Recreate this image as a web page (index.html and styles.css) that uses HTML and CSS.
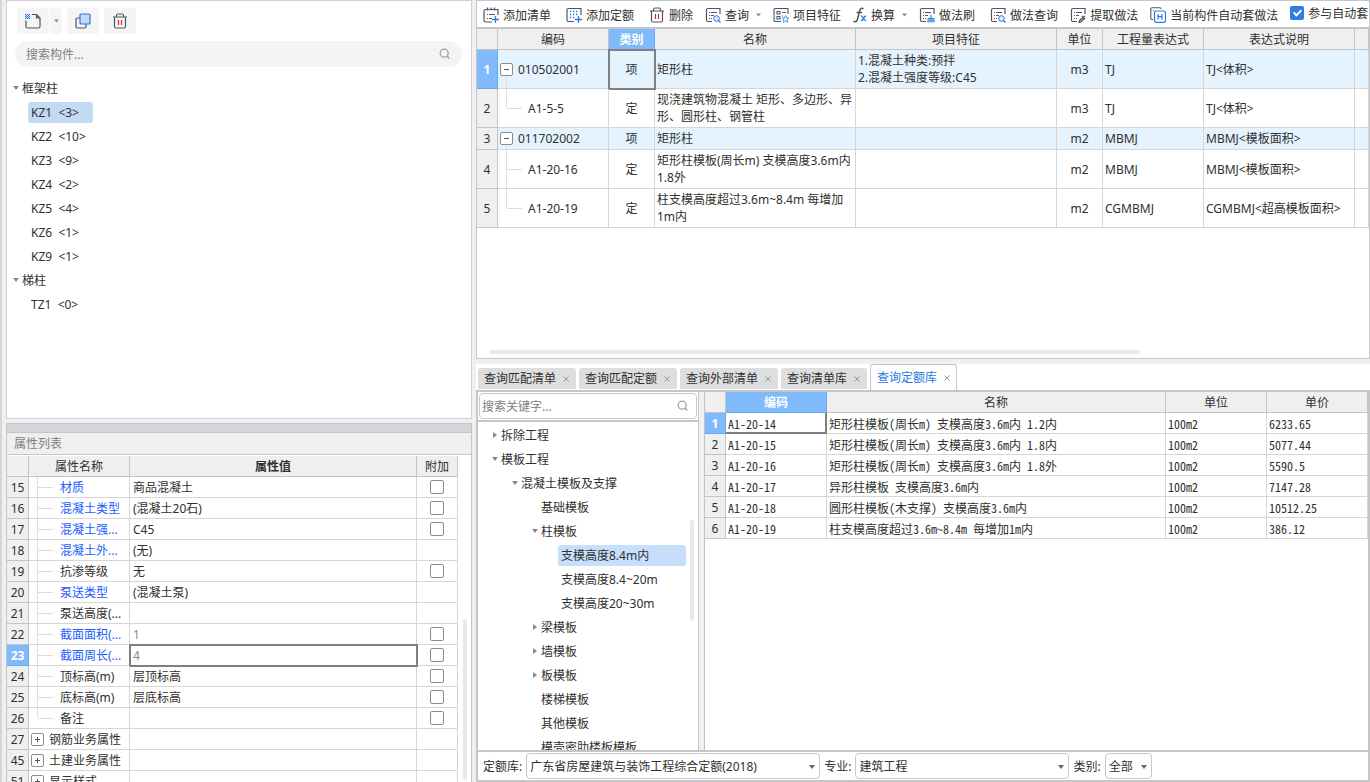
FILE: index.html
```html
<!DOCTYPE html>
<html lang="zh-CN">
<head>
<meta charset="utf-8">
<title>构件做法</title>
<link rel="stylesheet" href="styles.css">
</head>
<body>
<svg class="defs" aria-hidden="true">
  <symbol id="search" viewBox="0 0 12 12"><circle cx="5.2" cy="5.2" r="4" fill="none" stroke="#a0a0a0" stroke-width="1.3"/><path d="M8 8l2.3 2.5" stroke="#a0a0a0" stroke-width="1.4"/></symbol>
  <symbol id="close" viewBox="0 0 6 6"><path d="M.5.5l5 5M5.500.5l-5 5" stroke="#999" stroke-width="1" fill="none"/></symbol>
  <symbol id="down" viewBox="0 0 5 4"><path d="M0 .5h5L2.500 3.500z" fill="#888"/></symbol>
  <symbol id="trash" viewBox="0 0 16 16"><path d="M1 4h14M4.500 4V2.500a1.500 1.500 0 0 1 1.500-1.500h4a1.500 1.500 0 0 1 1.500 1.500V4M2.500 4v9.500a1.500 1.500 0 0 0 1.500 1.500h8a1.500 1.500 0 0 0 1.500-1.500V4" fill="none" stroke="#4d5566" stroke-width="1.200"/><path d="M6.500 7v5M9.500 7v5" stroke="#e02020" stroke-width="1.200"/></symbol>
  <symbol id="sheet" viewBox="0 0 16 16"><path d="M15 7V1.500H3A1.500 1.500 0 0 0 1.500 3v10A1.500 1.500 0 0 0 3 14.500h4" fill="none" stroke="#4d5566" stroke-width="1.200"/><path d="M4 5.500h1M6 5.500h6M4 8.500h1M6 8.500h3M4 11.500h1M6 11.500h1" stroke="#4d5566" stroke-width="1.100"/></symbol>
</svg>
<div class="app">
  <section class="side">
    <div class="components">
      <div class="comp-tools">
        <span class="split">
          <button class="sq" aria-label="新建"><svg width="16" height="16" viewBox="0 0 16 16"><path d="M7 1.500h4.500l3.500 3.500v8.500a1.500 1.500 0 0 1-1.500 1.500h-11A1.500 1.500 0 0 1 1 13.500V7.500M11.500 1.500V5H15" fill="none" stroke="#4d5566" stroke-width="1.200"/><path d="M0 1h5v5H0z" fill="#b9d5f8"/><path d="M0 1h1v1H0zM2 1h1v1H2zM4 1h1v1H4zM1 2h1v1H1zM3 2h1v1H3zM0 3h1v1H0zM2 3h1v1H2zM4 3h1v1H4zM1 4h1v1H1zM3 4h1v1H3zM0 5h1v1H0zM2 5h1v1H2zM4 5h1v1H4z" fill="#2f7fe6"/></svg></button>
          <button class="sq slim" aria-label="新建选项"><svg width="5" height="4"><use href="#down"/></svg></button>
        </span>
        <button class="sq" aria-label="复制"><svg width="16" height="16" viewBox="0 0 16 16"><rect x="1" y="5" width="10" height="10" rx="1.500" fill="none" stroke="#4d5566" stroke-width="1.200"/><rect x="5" y="1" width="10" height="10" rx="1" fill="#c5d9f3" stroke="#2878e0" stroke-width="1.200"/></svg></button>
        <button class="sq" aria-label="删除构件"><svg width="16" height="16"><use href="#trash"/></svg></button>
      </div>
      <label class="find"><input type="text" placeholder="搜索构件..." aria-label="搜索构件"><svg width="12" height="12"><use href="#search"/></svg></label>
      <ul class="tree">
        <li><i class="tri open"></i>框架柱</li>
        <li class="leaf"><span class="pick">KZ1&nbsp; &lt;3&gt;</span></li>
        <li class="leaf">KZ2&nbsp; &lt;10&gt;</li>
        <li class="leaf">KZ3&nbsp; &lt;9&gt;</li>
        <li class="leaf">KZ4&nbsp; &lt;2&gt;</li>
        <li class="leaf">KZ5&nbsp; &lt;4&gt;</li>
        <li class="leaf">KZ6&nbsp; &lt;1&gt;</li>
        <li class="leaf">KZ9&nbsp; &lt;1&gt;</li>
        <li><i class="tri open"></i>梯柱</li>
        <li class="leaf">TZ1&nbsp; &lt;0&gt;</li>
      </ul>
    </div>
    <div class="props">
      <div class="grip"></div>
      <h2>属性列表</h2>
      <div class="props-body">
      <table class="grid prop-grid">
        <colgroup><col class="w22"><col class="w101"><col><col class="w41"></colgroup>
        <thead><tr><th></th><th>属性名称</th><th class="b">属性值</th><th>附加</th></tr></thead>
        <tbody>
        <tr><th>15</th><td class="branch link">材质</td><td>商品混凝土</td><td class="c"><input type="checkbox" aria-label="附加 材质"></td></tr>
        <tr><th>16</th><td class="branch link">混凝土类型</td><td>(混凝土20石)</td><td class="c"><input type="checkbox" aria-label="附加 混凝土类型"></td></tr>
        <tr><th>17</th><td class="branch link">混凝土强...</td><td>C45</td><td class="c"><input type="checkbox" aria-label="附加 混凝土强度"></td></tr>
        <tr><th>18</th><td class="branch link">混凝土外...</td><td>(无)</td><td></td></tr>
        <tr><th>19</th><td class="branch">抗渗等级</td><td>无</td><td class="c"><input type="checkbox" aria-label="附加 抗渗等级"></td></tr>
        <tr><th>20</th><td class="branch link">泵送类型</td><td>(混凝土泵)</td><td></td></tr>
        <tr><th>21</th><td class="branch">泵送高度(...</td><td></td><td></td></tr>
        <tr><th>22</th><td class="branch link">截面面积(...</td><td class="dim">1</td><td class="c"><input type="checkbox" aria-label="附加 截面面积"></td></tr>
        <tr><th class="on">23</th><td class="branch link">截面周长(...</td><td class="dim cursor">4</td><td class="c"><input type="checkbox" aria-label="附加 截面周长"></td></tr>
        <tr><th>24</th><td class="branch">顶标高(m)</td><td>层顶标高</td><td class="c"><input type="checkbox" aria-label="附加 顶标高"></td></tr>
        <tr><th>25</th><td class="branch">底标高(m)</td><td>层底标高</td><td class="c"><input type="checkbox" aria-label="附加 底标高"></td></tr>
        <tr><th>26</th><td class="branch last">备注</td><td></td><td class="c"><input type="checkbox" aria-label="附加 备注"></td></tr>
        <tr><th>27</th><td class="root"><div class="node"><button class="exp plus" aria-label="展开"></button>钢筋业务属性</div></td><td></td><td></td></tr>
        <tr><th>45</th><td class="root"><div class="node"><button class="exp plus" aria-label="展开"></button>土建业务属性</div></td><td></td><td></td></tr>
        <tr><th>51</th><td class="root"><div class="node"><button class="exp plus" aria-label="展开"></button>显示样式</div></td><td></td><td></td></tr>
        </tbody>
      </table>
      <div class="thumb prop-thumb"></div>
      </div>
    </div>
  </section>

  <main class="work">
    <section class="bill">
      <div class="tools">
        <button class="tool wide"><svg width="16" height="16" viewBox="0 0 16 16"><path d="M15 8V2.500H2.500A1.500 1.500 0 0 0 1 4v9.500h0A1.500 1.500 0 0 0 2.500 15H9M4.500.5v3M8 .5v3M11.500.5v3" fill="none" stroke="#4d5566" stroke-width="1.200"/><path d="M4 7.500h1M6 7.500h6M4 11.500h1M6 11.500h3" stroke="#4d5566" stroke-width="1.100"/><path d="M12.500 9v7M9 12.500h7" stroke="#2878e0" stroke-width="1.300"/></svg>添加清单</button>
        <button class="tool wide"><svg width="16" height="16" viewBox="0 0 16 16"><path d="M15 8V1.500H2.500A1.500 1.500 0 0 0 1 3v10a1.500 1.500 0 0 0 1.500 1.500H8" fill="none" stroke="#4d5566" stroke-width="1.200"/><path d="M4 4.500h1.300M7 4.500h1.300M10 4.500h1.300M4 7.500h1.300M7 7.500h1.300M10 7.500h1.300M4 10.500h1.300M7 10.500h1.300" stroke="#2878e0" stroke-width="1.300"/><path d="M12.500 9v7M9 12.500h7" stroke="#2878e0" stroke-width="1.300"/></svg>添加定额</button>
        <button class="tool"><svg width="16" height="16"><use href="#trash"/></svg>删除</button>
        <button class="tool"><svg width="16" height="16" viewBox="0 0 16 16"><use href="#sheet"/><circle cx="11.500" cy="11.500" r="2.800" fill="#dcebfc" stroke="#2878e0"/><path d="M13.500 13.500l2 2" stroke="#2878e0" stroke-width="1.200"/></svg>查询<svg class="drop" width="5" height="4"><use href="#down"/></svg></button>
        <button class="tool"><svg width="16" height="16" viewBox="0 0 16 16"><path d="M15 7V1.500H2A1 1 0 0 0 1 2.500v11a1 1 0 0 0 1 1h6M4 4.500h3v2.500H4zM4 9.500h3V12H4zM9 5.500h4M9 9h1" fill="none" stroke="#4d5566" stroke-width="1.100"/><path d="M12.500 8.500l1.200 2.300 2.300.3-1.700 1.700.4 2.500-2.200-1.200-2.200 1.200.4-2.500L9 11.100l2.300-.3z" fill="#dcebfc" stroke="#4a90e8" stroke-width=".9"/></svg>项目特征</button>
        <button class="tool"><svg width="14" height="16" viewBox="0 0 14 16"><path d="M10.500 1.800C9 .6 7.300 1.400 6.700 3.800L4.500 12.200C3.900 14.500 2.200 15.400.3 14.400M3.500 5.500h5.500" fill="none" stroke="#4d5566" stroke-width="1.500"/><path d="M8 9c2.200-1 2.300 5.300 5.200 4.500M13 9c-2 0-2.500 4.500-5.200 4.600" fill="none" stroke="#2878e0" stroke-width="1.400"/></svg>换算<svg class="drop" width="5" height="4"><use href="#down"/></svg></button>
        <button class="tool wide"><svg width="16" height="16" viewBox="0 0 16 16"><use href="#sheet"/><path d="M12 8v3M8.500 11.500h7M9 13.500v2M11 13v2.500M13 13v2.500M15 13.500v2M8.500 13h7" stroke="#2878e0" stroke-width="1.200" fill="none"/></svg>做法刷</button>
        <button class="tool"><svg width="16" height="16" viewBox="0 0 16 16"><use href="#sheet"/><circle cx="11.500" cy="11.500" r="2.800" fill="#dcebfc" stroke="#2878e0"/><path d="M13.500 13.500l2 2" stroke="#2878e0" stroke-width="1.200"/></svg>做法查询</button>
        <button class="tool"><svg width="16" height="16" viewBox="0 0 16 16"><use href="#sheet"/><path d="M9 15.500l.5-2 3-3 1.500 1.500-3 3zM12 9l3 3M13.500 10.500L15 9" fill="#a8b0bd" stroke="#4d5566" stroke-width="1.100"/></svg>提取做法</button>
        <button class="tool"><svg width="16" height="16" viewBox="0 0 16 16"><path d="M3 12.500H2A1.200 1.200 0 0 1 .8 11.300V2A1.200 1.200 0 0 1 2 .8h8A1.200 1.200 0 0 1 11.200 2M3 3.500h1" fill="none" stroke="#4d5566" stroke-width="1.100"/><rect x="4.500" y="4" width="11" height="11.300" rx="1.800" fill="#fff" stroke="#2878e0" stroke-width="1.200"/><path d="M8 7v5.500M12 7v5.500M8 9.700h4" stroke="#2878e0" stroke-width="1.200"/></svg>当前构件自动套做法</button>
        <label class="auto"><input type="checkbox" checked>参与自动套</label>
      </div>
      <table class="grid bill-grid">
        <colgroup><col class="w21"><col class="w111"><col class="w46"><col class="w201"><col class="w201"><col class="w46"><col class="w101"><col class="w151"><col></colgroup>
        <thead><tr><th></th><th>编码</th><th class="on">类别</th><th>名称</th><th>项目特征</th><th>单位</th><th>工程量表达式</th><th>表达式说明</th><th></th></tr></thead>
        <tbody>
        <tr class="item tall"><th class="on">1</th><td class="stem"><div class="node"><button class="exp" aria-label="折叠"></button>010502001</div></td><td class="c cursor">项</td><td>矩形柱</td><td>1.混凝土种类:预拌<br>2.混凝土强度等级:C45</td><td class="c">m3</td><td>TJ</td><td>TJ&lt;体积&gt;</td><td></td></tr>
        <tr class="tall"><th>2</th><td class="branch last">A1-5-5</td><td class="c">定</td><td>现浇建筑物混凝土 矩形、多边形、异<br>形、圆形柱、钢管柱</td><td></td><td class="c">m3</td><td>TJ</td><td>TJ&lt;体积&gt;</td><td></td></tr>
        <tr class="item"><th>3</th><td class="stem"><div class="node"><button class="exp" aria-label="折叠"></button>011702002</div></td><td class="c">项</td><td>矩形柱</td><td></td><td class="c">m2</td><td>MBMJ</td><td>MBMJ&lt;模板面积&gt;</td><td></td></tr>
        <tr class="tall"><th>4</th><td class="branch">A1-20-16</td><td class="c">定</td><td>矩形柱模板(周长m) 支模高度3.6m内<br>1.8外</td><td></td><td class="c">m2</td><td>MBMJ</td><td>MBMJ&lt;模板面积&gt;</td><td></td></tr>
        <tr class="tall"><th>5</th><td class="branch last">A1-20-19</td><td class="c">定</td><td>柱支模高度超过3.6m~8.4m 每增加<br>1m内</td><td></td><td class="c">m2</td><td>CGMBMJ</td><td>CGMBMJ&lt;超高模板面积&gt;</td><td></td></tr>
        </tbody>
      </table>
      <div class="thumb wide-thumb"></div>
    </section>

    <section class="query">
      <div class="tabs" role="tablist">
        <button class="tab" role="tab">查询匹配清单<svg width="6" height="6"><use href="#close"/></svg></button>
        <button class="tab" role="tab">查询匹配定额<svg width="6" height="6"><use href="#close"/></svg></button>
        <button class="tab" role="tab">查询外部清单<svg width="6" height="6"><use href="#close"/></svg></button>
        <button class="tab" role="tab">查询清单库<svg width="6" height="6"><use href="#close"/></svg></button>
        <button class="tab current" role="tab" aria-selected="true">查询定额库<svg width="6" height="6"><use href="#close"/></svg></button>
      </div>
      <div class="split-view">
        <div class="catalog">
          <div class="find-row"><label class="find boxed"><input type="text" placeholder="搜索关键字..." aria-label="搜索关键字"><svg width="12" height="12"><use href="#search"/></svg></label></div>
          <ul class="tree">
            <li class="l1"><i class="tri"></i>拆除工程</li>
            <li class="l1"><i class="tri open"></i>模板工程</li>
            <li class="l2"><i class="tri open"></i>混凝土模板及支撑</li>
            <li class="l3"><i class="tri none"></i>基础模板</li>
            <li class="l3"><i class="tri open"></i>柱模板</li>
            <li class="l4"><span class="pick">支模高度8.4m内</span></li>
            <li class="l4"><span>支模高度8.4~20m</span></li>
            <li class="l4"><span>支模高度20~30m</span></li>
            <li class="l3"><i class="tri"></i>梁模板</li>
            <li class="l3"><i class="tri"></i>墙模板</li>
            <li class="l3"><i class="tri"></i>板模板</li>
            <li class="l3"><i class="tri none"></i>楼梯模板</li>
            <li class="l3"><i class="tri none"></i>其他模板</li>
            <li class="l3"><i class="tri none"></i>模壳密肋楼板模板</li>
          </ul>
          <div class="thumb cat-thumb"></div>
        </div>
        <div class="results">
          <table class="grid result-grid">
            <colgroup><col class="w21"><col class="w101"><col><col class="w101"><col class="w101"></colgroup>
            <thead><tr><th></th><th class="on">编码</th><th>名称</th><th>单位</th><th>单价</th></tr></thead>
            <tbody>
            <tr><th class="on">1</th><td class="cursor-end">A1-20-14</td><td>矩形柱模板(周长m) 支模高度3.6m内 1.2内</td><td>100m2</td><td>6233.65</td></tr>
            <tr><th>2</th><td>A1-20-15</td><td>矩形柱模板(周长m) 支模高度3.6m内 1.8内</td><td>100m2</td><td>5077.44</td></tr>
            <tr><th>3</th><td>A1-20-16</td><td>矩形柱模板(周长m) 支模高度3.6m内 1.8外</td><td>100m2</td><td>5590.5</td></tr>
            <tr><th>4</th><td>A1-20-17</td><td>异形柱模板 支模高度3.6m内</td><td>100m2</td><td>7147.28</td></tr>
            <tr><th>5</th><td>A1-20-18</td><td>圆形柱模板(木支撑) 支模高度3.6m内</td><td>100m2</td><td>10512.25</td></tr>
            <tr><th>6</th><td>A1-20-19</td><td>柱支模高度超过3.6m~8.4m 每增加1m内</td><td>100m2</td><td>386.12</td></tr>
            </tbody>
          </table>
        </div>
      </div>
      <div class="filters">
        <label for="lib">定额库:</label><span class="pickbox lib"><select id="lib"><option>广东省房屋建筑与装饰工程综合定额(2018)</option></select></span>
        <label for="major">专业:</label><span class="pickbox major"><select id="major"><option>建筑工程</option></select></span>
        <label for="kind">类别:</label><span class="pickbox kind"><select id="kind"><option>全部</option></select></span>
      </div>
    </section>
  </main>
</div>
</body>
</html>
```
FILE: styles.css
```css
*, *::before, *::after { box-sizing: border-box; }
body, button, input, select, table { font: 12px/17px "Noto Sans", "Noto Sans CJK SC", sans-serif; color: #303030; }
body { margin: 0; background: #f0f0f0; }
button { border: 0; background: none; padding: 0; white-space: nowrap; }
ul { list-style: none; margin: 0; padding: 0; }
svg { flex: none; }
.defs { display: none; }

.app {
  height: 100vh; overflow: hidden; display: grid;
  grid-template-columns: 466fr 894fr; grid-template-rows: 100%;
  gap: 4px; padding-left: 4px; border-left: 2px solid #d6d6d6;
}
.side, .work { display: grid; grid-template-columns: 100%; min-width: 0; }
.side { grid-template-rows: minmax(0, 419fr) minmax(0, 359fr); gap: 4px; }
.work { grid-template-rows: minmax(0, 359fr) minmax(0, 418fr); gap: 5px; }

/* component list */
.components { background: #fff; border: 1px solid #d0d0d0; padding-top: 7px; overflow: hidden; }
.comp-tools { display: flex; gap: 5px; padding-left: 10px; }
.split { display: flex; gap: 1px; }
.sq { width: 32px; height: 26px; border-radius: 3px; background: #f5f5f5; display: flex; align-items: center; justify-content: center; }
.slim { width: 12px; }
.find { display: flex; align-items: center; height: 26px; background: #f4f4f4; }
.find input { flex: 1; min-width: 0; border: 0; background: none; outline: 0; padding: 0; }
.find input::placeholder { color: #808080; opacity: 1; }
.components .find { margin: 7px 9px 9px 8px; padding: 0 11px; border-radius: 13px; }
.tree li { height: 24px; display: flex; align-items: center; white-space: nowrap; }
.components .tree { padding-left: 6px; }
.components .leaf { padding-left: 18px; }
.components .pick { margin-left: -3px; padding: 2px 14px 2px 3px; background: #c2daf2; }
.pick { border-radius: 3px; }
.tri { width: 6px; margin-right: 3px; flex: none; }
.tri::before { content: ""; display: block; width: 0; margin-left: 1px; border: 3px solid transparent; border-left: 4px solid #888; border-right: 0; }
.tri.open::before { margin-left: 0; border: 3px solid transparent; border-top: 4px solid #888; border-bottom: 0; }
.tri.none::before { visibility: hidden; }

/* shared data grid */
.grid { table-layout: fixed; border-collapse: separate; border-spacing: 0; width: 100%; }
.grid th, .grid td { height: 21px; padding: 0 2px; border: solid #d6d6d6; border-width: 0 1px 1px 0; white-space: nowrap; overflow: hidden; text-align: left; font-weight: 400; }
.grid th { background: #efefef; border-color: #c4c4c4; text-align: center; padding: 0; }
.grid th.b { font-weight: 700; }
.grid th.on { background: #80bafb; border-color: #6aa8ee; color: #fff; font-weight: 700; }
.grid td.c { text-align: center; }
.grid .cursor { outline: 2px solid #808080; outline-offset: -1px; position: relative; overflow: visible; }
.grid .cursor-end { box-shadow: inset -1px -1px #808080; border-color: #808080; }
.grid .item td { background: #e5f3ff; }
.grid .link { color: #1a5cff; }
.grid .dim { color: #8a8a8a; }
.grid .branch { position: relative; padding-left: 30px; }
.branch::before, .stem::before { content: ""; position: absolute; left: 8px; top: 0; bottom: 0; border-left: 1px solid #dedede; }
.branch.last::before { bottom: 50%; }
.branch::after { content: ""; position: absolute; left: 9px; top: 50%; width: 15px; border-top: 1px solid #dedede; }
.stem { position: relative; }
.stem::before { top: calc(50% + 7px); }
.node { display: flex; align-items: center; gap: 5px; }
.exp { position: relative; flex: none; width: 13px; height: 13px; border: 1px solid #8c8c8c; border-radius: 2px; background: #fff; }
.exp::before, .plus::after { content: ""; position: absolute; left: 3px; top: 5px; width: 5px; height: 1px; background: #555; }
.plus::after { left: 5px; top: 3px; width: 1px; height: 5px; }
.w21 { width: 21px; } .w22 { width: 22px; } .w41 { width: 41px; } .w46 { width: 46px; }
.w101 { width: 101px; } .w111 { width: 111px; } .w151 { width: 151px; } .w201 { width: 201px; }
.thumb { border-radius: 2px; background: #e9e9e9; }

/* properties */
.props { overflow: hidden; display: flex; flex-direction: column; border: solid #c4c6cc; border-width: 1px 1px 0; }
.grip { flex: none; height: 9px; background: #d3d5da; border-bottom: 1px solid #c2c5cc; }
.props h2 { flex: none; margin: 0; height: 22px; padding: 2px 7px; font-size: 12px; font-weight: 400; color: #808080; background: #efefef; border-bottom: 1px solid #c4c6cc; }
.props-body { flex: 1; min-height: 0; overflow: hidden; position: relative; background: #fff; padding: 1px 13px 0 0; }
.prop-grid td { padding-left: 3px; }
.prop-grid td.c { padding: 0; }
.prop-grid td.root { padding-left: 2px; }
.prop-grid .branch { padding-left: 31px; }
.prop-thumb { position: absolute; right: 4px; top: 164px; bottom: 2px; width: 4px; }
input[type=checkbox] { appearance: none; margin: 0; width: 14px; height: 14px; border: 1px solid #8c8c8c; border-radius: 2px; background: #fff; }
.prop-grid input { display: block; margin: 0 auto; }

/* bill panel */
.bill { display: flex; flex-direction: column; overflow: hidden; background: #fff; border: 1px solid #c4c6ca; }
.tools { flex: none; display: flex; align-items: center; gap: 12px; height: 28px; padding: 2px 0 0 6px; overflow: hidden; border-bottom: 2px solid #c4c4c4; }
.tool { flex: none; display: flex; align-items: center; gap: 4px; }
.wide { margin-right: 3px; }
.drop { margin-left: 3px; }
.auto { display: flex; align-items: center; gap: 4px; flex: none; padding-bottom: 4px; }
.auto input { position: relative; border: 0; background: #2e7de0; }
.auto input::after { content: ""; position: absolute; left: 5px; top: 2px; width: 5px; height: 8px; border: solid #fff; border-width: 0 2px 2px 0; transform: rotate(45deg); }
.bill-grid td, .bill-grid tbody th { height: 22px; padding: 0 2px; }
.bill-grid .tall > * { height: 39px; }
.bill-grid td.c { padding: 0; }
.wide-thumb { margin: auto 229px 4px 12px; height: 4px; }

/* query panel */
.query { display: flex; flex-direction: column; background: #fff; }
.tabs { flex: none; display: flex; align-items: flex-end; gap: 3px; height: 28px; padding-left: 2px; border-bottom: 2px solid #c4c6cc; }
.tab { display: flex; align-items: center; gap: 7px; height: 21px; margin-bottom: 1px; padding: 0 7px 0 6px; background: #dedede; border-radius: 3px 3px 0 0; }
.current { height: 26px; margin-bottom: 0; padding: 0 6px; background: #fff; border: 1px solid #c4c6cc; border-bottom: 0; color: #2878e0; }
.split-view { flex: 1; min-height: 0; display: grid; grid-template-columns: 223fr 666fr; grid-template-rows: 100%; gap: 5px; background: #f0f0f0; border-bottom: 2px solid #c4c6ca; }
.catalog { position: relative; overflow: hidden; min-width: 0; background: #fff; border: solid #c4c6cc; border-width: 0 1px 0 2px; }
.find-row { padding: 1px; border-bottom: 2px solid #c4c6cc; height: 30px; }
.boxed { background: #fff; border: 1px solid #c8c8c8; border-radius: 4px; padding: 0 7px 0 2px; }
.catalog .tree { padding-top: 1px; }
.l1 { padding-left: 14px; } .l2 { padding-left: 34px; } .l3 { padding-left: 54px; } .l4 { padding-left: 80px; }
.l4 span { padding: 2px 3px; }
.l4 .pick { flex: 1; margin-right: 12px; background: #c7dffa; }
.cat-thumb { position: absolute; right: 4px; top: 128px; width: 4px; height: 101px; }
.results { min-width: 0; overflow: hidden; background: #fff; border: solid #c4c4c4; border-width: 0 2px 0 1px; }
.result-grid td { font-family: "Noto Sans Mono CJK SC", "Noto Sans CJK SC", monospace; }
.filters { flex: none; display: flex; align-items: center; height: 30px; padding-left: 5px; gap: 4px; border: solid #c4c6ca; border-width: 0 2px 2px; white-space: nowrap; }
.pickbox { position: relative; }
.pickbox select { appearance: none; width: 100%; height: 26px; padding: 0 3px; border: 1px solid #c8c8c8; border-radius: 4px; background: #fff; }
.pickbox::after { content: ""; position: absolute; right: 5px; top: 12px; border: 3px solid transparent; border-top: 4px solid #666; border-bottom: 0; pointer-events: none; }
.lib { flex: 0 1 294px; } .major { flex: 0 1 214px; } .kind { flex: none; width: 47px; }
```
